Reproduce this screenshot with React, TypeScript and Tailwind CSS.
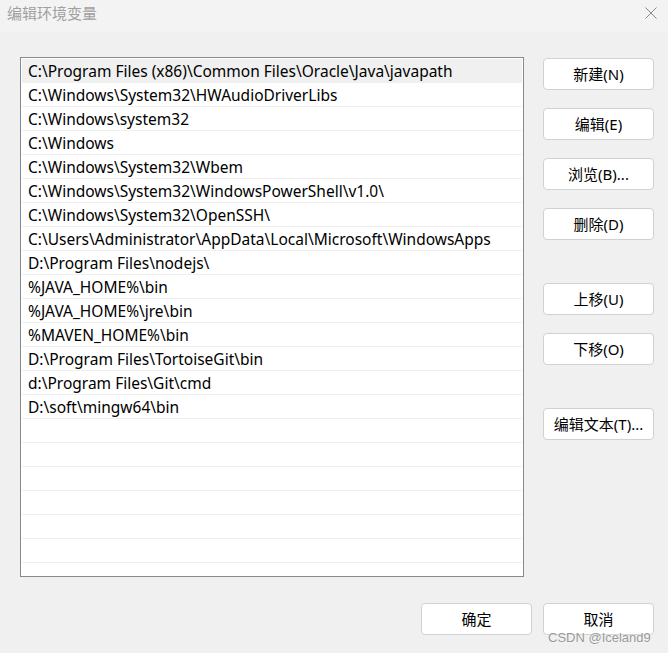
const paths = [
  "C:\\Program Files (x86)\\Common Files\\Oracle\\Java\\javapath",
  "C:\\Windows\\System32\\HWAudioDriverLibs",
  "C:\\Windows\\system32",
  "C:\\Windows",
  "C:\\Windows\\System32\\Wbem",
  "C:\\Windows\\System32\\WindowsPowerShell\\v1.0\\",
  "C:\\Windows\\System32\\OpenSSH\\",
  "C:\\Users\\Administrator\\AppData\\Local\\Microsoft\\WindowsApps",
  "D:\\Program Files\\nodejs\\",
  "%JAVA_HOME%\\bin",
  "%JAVA_HOME%\\jre\\bin",
  "%MAVEN_HOME%\\bin",
  "D:\\Program Files\\TortoiseGit\\bin",
  "d:\\Program Files\\Git\\cmd",
  "D:\\soft\\mingw64\\bin",
];

const rows = [...paths, ...Array(7).fill("")];

function Btn({ label, className = "" }: { label: string; className?: string }) {
  return (
    <button className={`w-[111px] h-[32px] bg-white border border-[#d1d1d1] rounded-[4px] text-[15px] text-black flex items-center justify-center ${className}`}>
      {label}
    </button>
  );
}

export default function App() {
  return (
    <div className="relative w-[668px] h-[653px] bg-[#f0f0f0] overflow-hidden font-['Noto_Sans','Noto_Sans_CJK_SC',sans-serif]">
      {/* title bar */}
      <div className="h-[32px] bg-[#f3f3f3] flex items-center justify-between pl-[7px] pr-[10px]">
        <span className="text-[15px] text-[#a0a0a0] font-['Noto_Sans_CJK_SC',sans-serif] -mt-[6px]">编辑环境变量</span>
        <svg width="14" height="14" viewBox="0 0 14 14" className="-mt-[6px]">
          <path d="M1.5 1.5 L12.5 12.5 M12.5 1.5 L1.5 12.5" stroke="#8a8a8a" strokeWidth="1" fill="none" />
        </svg>
      </div>

      <div className="flex pl-[20px] pt-[25px]">
        {/* list */}
        <div className="w-[504px] h-[520px] border border-[#858a91] bg-white p-px overflow-hidden">
          {rows.map((p, i) => (
            <div
              key={i}
              className={`h-[24px] border-b border-[#f0f0f0] pl-[6px] pt-[2px] flex items-center text-[15.5px] text-black whitespace-nowrap ${i === 0 ? "bg-[#f0f0f0]" : ""}`}
            >
              {p}
            </div>
          ))}
        </div>

        {/* side buttons */}
        <div className="ml-[19px] pt-px flex flex-col">
          <Btn label="新建(N)" />
          <Btn label="编辑(E)" className="mt-[18px]" />
          <Btn label="浏览(B)..." className="mt-[18px]" />
          <Btn label="删除(D)" className="mt-[18px]" />
          <Btn label="上移(U)" className="mt-[43px]" />
          <Btn label="下移(O)" className="mt-[18px]" />
          <Btn label="编辑文本(T)..." className="mt-[43px]" />
        </div>
      </div>

      {/* bottom buttons */}
      <div className="flex justify-end gap-[11px] pr-[14px] mt-[26px]">
        <Btn label="确定" />
        <Btn label="取消" />
      </div>

      {/* watermark */}
      <div className="absolute left-[548px] top-[630px] text-[13px] leading-[16px] text-[#9a9a9a] font-['Liberation_Sans',sans-serif] [text-shadow:0_0_2px_#fff]">
        CSDN @Iceland9
      </div>
    </div>
  );
}
